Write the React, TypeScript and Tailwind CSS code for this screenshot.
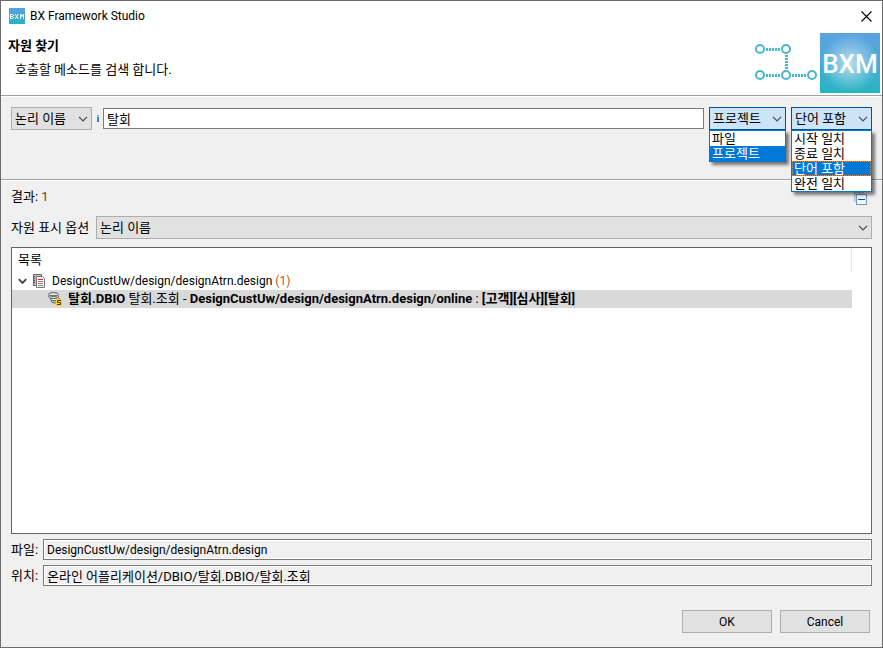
import React from 'react';

function Chevron({ className = '' }: { className?: string }) {
  return (
    <svg className={className} width="10" height="6" viewBox="0 0 10 6" fill="none" stroke="#4a4a4a" strokeWidth="1.2" aria-hidden="true">
      <path d="M1 0.8 5 4.8 9 0.8" />
    </svg>
  );
}

type ComboProps = {
  label: string;
  options: string[];
  value: string;
  open?: boolean;
  focused?: boolean;
  className?: string;
};

function Combo({ label, options, value, open = false, focused = false, className = '' }: ComboProps) {
  const selectedStyle = focused
    ? 'border border-dotted border-[#ff8728] bg-[#0078d7] pl-px leading-[13px] text-white'
    : 'bg-[#0078d7] pl-[2px] leading-[15px] text-white';
  return (
    <div className={`relative ${className}`}>
      <select
        aria-label={label}
        defaultValue={value}
        className={`block h-[23px] w-full appearance-none border pr-5 pl-[3px] outline-none ${
          open ? 'border-[#005499] bg-[#cce4f7]' : 'border-[#adadad] bg-[#e1e1e1]'
        }`}
      >
        {options.map((o) => (
          <option key={o}>{o}</option>
        ))}
      </select>
      <Chevron className="pointer-events-none absolute top-[9px] right-1" />
      {open && (
        <ul
          role="listbox"
          aria-label={label}
          className="absolute top-full left-0 z-10 w-full border border-[#0078d7] bg-white shadow-[3px_3px_3px_rgba(0,0,0,0.5)]"
        >
          {options.map((o) => (
            <li
              key={o}
              role="option"
              aria-selected={o === value}
              className={`h-[15px] whitespace-nowrap ${o === value ? selectedStyle : 'pl-[2px] leading-[15px]'}`}
            >
              {o}
            </li>
          ))}
        </ul>
      )}
    </div>
  );
}

function AppIcon() {
  return (
    <svg width="16" height="16" viewBox="0 0 16 16" aria-hidden="true">
      <defs>
        <linearGradient id="appIcon" x1="0" y1="0" x2="0" y2="1">
          <stop offset="0" stopColor="#5b9fe0" />
          <stop offset="1" stopColor="#27b5bf" />
        </linearGradient>
      </defs>
      <rect width="16" height="16" fill="url(#appIcon)" />
      <g fill="none" stroke="#fff" strokeWidth="1">
        <path d="M1.5 6v5M1 6.5h3M1 8.5h3M1 10.5h3M4.5 7v1M4.5 9v1" />
        <path d="M6 6 9.5 11M9.5 6 6 11" />
        <path d="M11.5 11V6l1.5 2.5L14.5 6v5" />
      </g>
    </svg>
  );
}

function Banner() {
  const nodes = [[6, 16], [32, 16], [6, 42], [32, 42], [58, 42]];
  return (
    <svg width="126" height="60" viewBox="0 0 126 60" role="img" aria-label="BXM">
      <defs>
        <linearGradient id="tile" x1="0" y1="0" x2="0" y2="1">
          <stop offset="0" stopColor="#5ba2e0" />
          <stop offset="0.5" stopColor="#4aabd6" />
          <stop offset="1" stopColor="#25b5bf" />
        </linearGradient>
        <radialGradient id="glow">
          <stop offset="0" stopColor="#fff" stopOpacity="0.6" />
          <stop offset="1" stopColor="#fff" stopOpacity="0" />
        </radialGradient>
      </defs>
      <g fill="none" stroke="#45b9ca" strokeWidth="3" strokeDasharray="2 1">
        <path d="M12 16.5h15M12 42.5h15M38 42.5h15M32.5 22v15" />
      </g>
      <g fill="#fff" stroke="#45b9ca" strokeWidth="2">
        {nodes.map(([x, y]) => (
          <circle key={`${x}-${y}`} cx={x} cy={y} r="4" />
        ))}
      </g>
      <rect x="66" width="60" height="60" fill="url(#tile)" />
      <circle cx="96" cy="30" r="29" fill="url(#glow)" />
      <text x="96" y="40" textAnchor="middle" fill="#fff" fontFamily="Roboto, sans-serif" fontWeight="500" fontSize="26">
        BXM
      </text>
    </svg>
  );
}

function PackageIcon() {
  return (
    <svg width="12" height="14" viewBox="0 0 12 14" aria-hidden="true">
      <path d="M0.5 0.5h8v11h-8z" fill="#bdbdbd" stroke="#6b6b6b" />
      <path d="M0 2.5h2M0 4.5h2M0 6.5h2M0 8.5h2" stroke="#555" />
      <path d="M3.5 2.5h6l2 2v9h-8z" fill="#f5f5f5" stroke="#777" />
      <path d="M5 5.5h5" stroke="#e02020" />
      <path d="M5 7.5h5M5 9.5h5M5 11.5h5" stroke="#888" />
    </svg>
  );
}

function DbioIcon() {
  return (
    <svg width="14" height="14" viewBox="0 0 14 14" aria-hidden="true">
      <g fill="#e0e0e0" stroke="#5c5c5c">
        <ellipse cx="7.5" cy="9" rx="4.5" ry="2" />
        <ellipse cx="7" cy="7" rx="4.5" ry="2" />
        <ellipse cx="5.5" cy="4.5" rx="5" ry="2" />
        <ellipse cx="5.5" cy="2.5" rx="5" ry="2" />
      </g>
      <path d="M2 3.5h7M4 8.5h5" stroke="#777" />
      <rect x="8" y="7" width="6" height="7" fill="#ffd21e" />
      <path d="M13 8.5H9.5v2h3v2H9" fill="none" stroke="#4d4000" />
    </svg>
  );
}

function CollapseIcon() {
  return (
    <svg width="13" height="13" viewBox="0 0 13 13" aria-hidden="true">
      <path d="M0.5 10V0.5H10" fill="none" stroke="#a9bbd3" strokeWidth="2" />
      <rect x="2.5" y="2.5" width="10" height="10" fill="#eef8ff" stroke="#8093b3" />
      <path d="M4 7.5h7" stroke="#0b4f86" />
    </svg>
  );
}

type FieldProps = { id: string; label: string; value: string; className?: string };

function Field({ id, label, value, className = '' }: FieldProps) {
  return (
    <div className="flex items-center">
      <label htmlFor={id} className="w-8 shrink-0">{label}</label>
      <input
        id={id}
        readOnly
        defaultValue={value}
        className={`h-[21px] min-w-0 flex-1 border border-[#7a7a7a] bg-[#f0f0f0] px-[3px] shadow-[inset_0_0_0_1px_#fff] outline-none ${className}`}
      />
    </div>
  );
}

export default function App() {
  return (
    <div className="flex min-h-screen flex-col border border-[#6b6b6b] bg-[#f0f0f0] font-[Roboto,'Noto_Sans_CJK_KR',sans-serif] text-[13px] leading-[18px] text-black">
      <header className="border-b border-[#a0a0a0] bg-white">
        <div className="flex h-[30px] items-center gap-[5px] pl-2">
          <AppIcon />
          <span className="flex-1 text-[12px]">BX Framework Studio</span>
          <button type="button" aria-label="닫기" className="flex h-full w-8 items-center justify-center">
            <svg width="11" height="11" viewBox="0 0 11 11" stroke="#000" strokeWidth="1.1" aria-hidden="true">
              <path d="M0.5 0.5l10 10M10.5 0.5l-10 10" />
            </svg>
          </button>
        </div>
        <div className="flex items-start justify-between py-[2px] pr-[2px]">
          <div className="pt-1 pl-[7px]">
            <h1 className="font-bold">자원 찾기</h1>
            <p className="pt-[6px] pl-[7px]">호출할 메소드를 검색 합니다.</p>
          </div>
          <Banner />
        </div>
      </header>

      <main className="flex flex-1 flex-col border-t border-white">
        <div className="flex h-[83px] items-start border-b border-[#a0a0a0] px-[10px] pt-[10px]">
          <Combo label="검색 기준" options={['논리 이름', '물리 이름']} value="논리 이름" className="w-[81px] shrink-0" />
          <span className="flex h-[23px] w-[11px] items-center justify-center pl-px font-['Liberation_Serif',serif] text-[10px] font-bold text-[#0b4f9e]">
            <span className="bg-white px-px leading-[8px]">i</span>
          </span>
          <input
            aria-label="검색어"
            defaultValue="탈회"
            className="mt-px h-[21px] min-w-0 flex-1 border border-[#7a7a7a] bg-white px-[3px] outline-none"
          />
          <Combo label="검색 범위" options={['파일', '프로젝트']} value="프로젝트" open className="ml-[5px] w-[77px] shrink-0" />
          <Combo
            label="일치 방식"
            options={['시작 일치', '종료 일치', '단어 포함', '완전 일치']}
            value="단어 포함"
            open
            focused
            className="ml-[5px] w-[81px] shrink-0"
          />
        </div>

        <div className="flex flex-1 flex-col border-t border-white px-[10px]">
          <div className="flex h-[35px] items-center justify-between pr-[5px]">
            <p className="pb-[3px]">
              결과: <span className="text-[#7a3b10]">1</span>
            </p>
            <button type="button" aria-label="모두 접기">
              <CollapseIcon />
            </button>
          </div>
          <div className="flex items-center">
            <span className="w-[85px] shrink-0 whitespace-nowrap">자원 표시 옵션</span>
            <Combo label="자원 표시 옵션" options={['논리 이름', '물리 이름']} value="논리 이름" className="flex-1" />
          </div>

          <section className="mt-2 flex-1 border border-[#646464] bg-white pr-[19px]">
            <div className="flex h-6 items-center border-r border-[#e5e5e5] pl-[6px]">목록</div>
            <ul role="tree" aria-label="목록">
              <li role="treeitem" aria-expanded="true">
                <div className="flex h-[18px] items-center pl-[6px]">
                  <svg width="9" height="7" viewBox="0 0 9 7" fill="none" stroke="#404040" strokeWidth="1.8" aria-hidden="true">
                    <path d="M0.8 1.2 4.5 5 8.2 1.2" />
                  </svg>
                  <span className="ml-[6px]"><PackageIcon /></span>
                  <span className="ml-[7px] text-[12px] whitespace-nowrap">
                    DesignCustUw/design/designAtrn.design <span className="text-[#b5542d]">(1)</span>
                  </span>
                </div>
                <ul role="group">
                  <li role="treeitem" aria-selected="true" className="flex h-[18px] items-center bg-[#d9d9d9] pl-9">
                    <DbioIcon />
                    <span className="ml-[6px] whitespace-nowrap">
                      <b>탈회.DBIO</b> 탈회.조회 - <b>DesignCustUw/design/designAtrn.design</b>/<b>online</b> : <b>[고객][심사][탈회]</b>
                    </span>
                  </li>
                </ul>
              </li>
            </ul>
          </section>

          <div className="mt-[5px] flex flex-col gap-[5px]">
            <Field id="file" label="파일:" value="DesignCustUw/design/designAtrn.design" className="text-[12px]" />
            <Field id="location" label="위치:" value="온라인 어플리케이션/DBIO/탈회.DBIO/탈회.조회" />
          </div>

          <div className="mt-6 mb-[14px] flex justify-end gap-2 pr-[2px] text-[12px]">
            <button type="button" className="h-[23px] w-[90px] border border-[#adadad] bg-[#e1e1e1]">OK</button>
            <button type="button" className="h-[23px] w-[90px] border border-[#adadad] bg-[#e1e1e1]">Cancel</button>
          </div>
        </div>
      </main>
    </div>
  );
}
